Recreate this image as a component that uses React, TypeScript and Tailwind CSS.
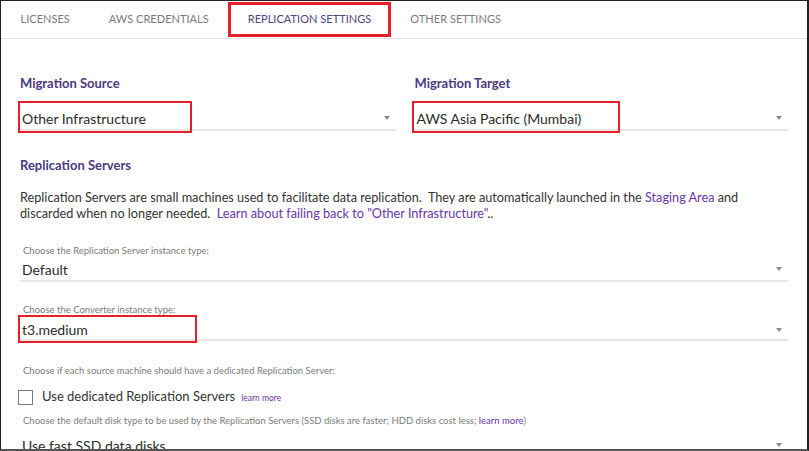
import React from "react";

const FONT = { fontFamily: "Lato, 'Open Sans', Arial, sans-serif" };

type Tab = { id: string; label: string };

const tabs: Tab[] = [
  { id: "lic", label: "Licenses" },
  { id: "aws", label: "AWS Credentials" },
  { id: "rep", label: "Replication Settings" },
  { id: "other", label: "Other Settings" },
];

function Caret() {
  return <span className="block w-0 h-0 border-l-[3.5px] border-r-[3.5px] border-t-[4px] border-l-transparent border-r-transparent border-t-[#8a8a8a]" />;
}

function Select({ value, box, className = "" }: { value: string; box?: string; className?: string }) {
  return (
    <div className={`relative flex items-center justify-between h-[24px] border-b-2 border-[#e6e6e6] pl-[2px] pr-[6px] ${className}`}>
      <span className="text-[14px] text-[#2b2b2b]">{value}</span>
      <Caret />
      {/* red annotation box */}
      {box && <div className={`absolute border-2 border-[#e5202b] ${box}`} />}
    </div>
  );
}

function Hint({ children, className = "" }: { children: React.ReactNode; className?: string }) {
  return <div className={`h-[14px] flex items-center pl-[3px] text-[9.5px] text-[#7b7b7b] ${className}`}>{children}</div>;
}

export default function App() {
  const active = "rep";

  return (
    <div style={FONT} className="w-[809px] h-[451px] overflow-hidden bg-white border-t border-l border-r-2 border-b-2 border-t-[#222] border-l-[#222] border-r-[#222] border-b-[#555]">
      {/* Tabs */}
      <nav className="flex h-[38px] border-b border-[#e2e2e2]">
        {tabs.map((t) => (
          <div key={t.id} className="relative flex items-center px-[19.5px]">
            <span className={`text-[11px] uppercase tracking-[0.03px] ${t.id === active ? "text-[#4f4382]" : "text-[#7a7a7a]"}`}>{t.label}</span>
            {t.id === active && <div className="absolute left-0 right-0 top-[1px] bottom-[1px] border-[3px] border-[#e5202b]" />}
          </div>
        ))}
      </nav>

      <div className="px-[19px]">
        {/* Source / target */}
        <div className="grid grid-cols-2 gap-x-[17px] mt-[35px]">
          <div>
            <h3 className="h-[20px] flex items-center text-[13px] font-bold text-[#4b3a7e]">Migration Source</h3>
            <Select value="Other Infrastructure" className="mt-[13px]" box="-left-[2px] -top-[6px] w-[174px] h-[32px]" />
          </div>
          <div>
            <h3 className="h-[20px] flex items-center pl-[2px] text-[13px] font-bold text-[#4b3a7e]">Migration Target</h3>
            <Select value="AWS Asia Pacific (Mumbai)" className="mt-[13px] pl-[4px]" box="-left-[1px] -top-[6px] w-[208px] h-[32px]" />
          </div>
        </div>

        <h3 className="mt-[25px] h-[20px] flex items-center text-[13px] font-bold text-[#4b3a7e]">Replication Servers</h3>

        <p className="mt-[13px] text-[12.7px] leading-[16px] text-[#333]">
          Replication Servers are small machines used to facilitate data replication.&nbsp; They are automatically launched in the{" "}
          <span className="text-[#6a35a8]">Staging Area</span> and discarded when no longer needed.&nbsp;{" "}
          <span className="text-[#6a35a8]">Learn about failing back to "Other Infrastructure"</span>..
        </p>

        <Hint className="mt-[23px]">Choose the Replication Server instance type:</Hint>
        <Select value="Default" />

        <Hint className="mt-[21px]">Choose the Converter instance type:</Hint>
        <Select value="t3.medium" className="pt-[3px]" box="-left-[2px] -top-[2px] w-[179px] h-[28px]" />

        <Hint className="mt-[23px]">Choose if each source machine should have a dedicated Replication Server:</Hint>
        <label className="mt-[9px] h-[20px] flex items-center">
          <span className="-ml-[2px] w-[15px] h-[15px] border border-[#777] bg-white" />
          <span className="ml-[9px] text-[13px] text-[#333]">Use dedicated Replication Servers</span>
          <span className="ml-[6px] mt-[3px] text-[8.5px] text-[#6a35a8]">learn more</span>
        </label>

        <Hint className="mt-[7px] text-[9.3px]">
          Choose the default disk type to be used by the Replication Servers (SSD disks are faster; HDD disks cost less;&nbsp;
          <span className="text-[#6a35a8]">learn more</span>)
        </Hint>
        <Select value="Use fast SSD data disks" className="mt-[6px]" />
      </div>
    </div>
  );
}
